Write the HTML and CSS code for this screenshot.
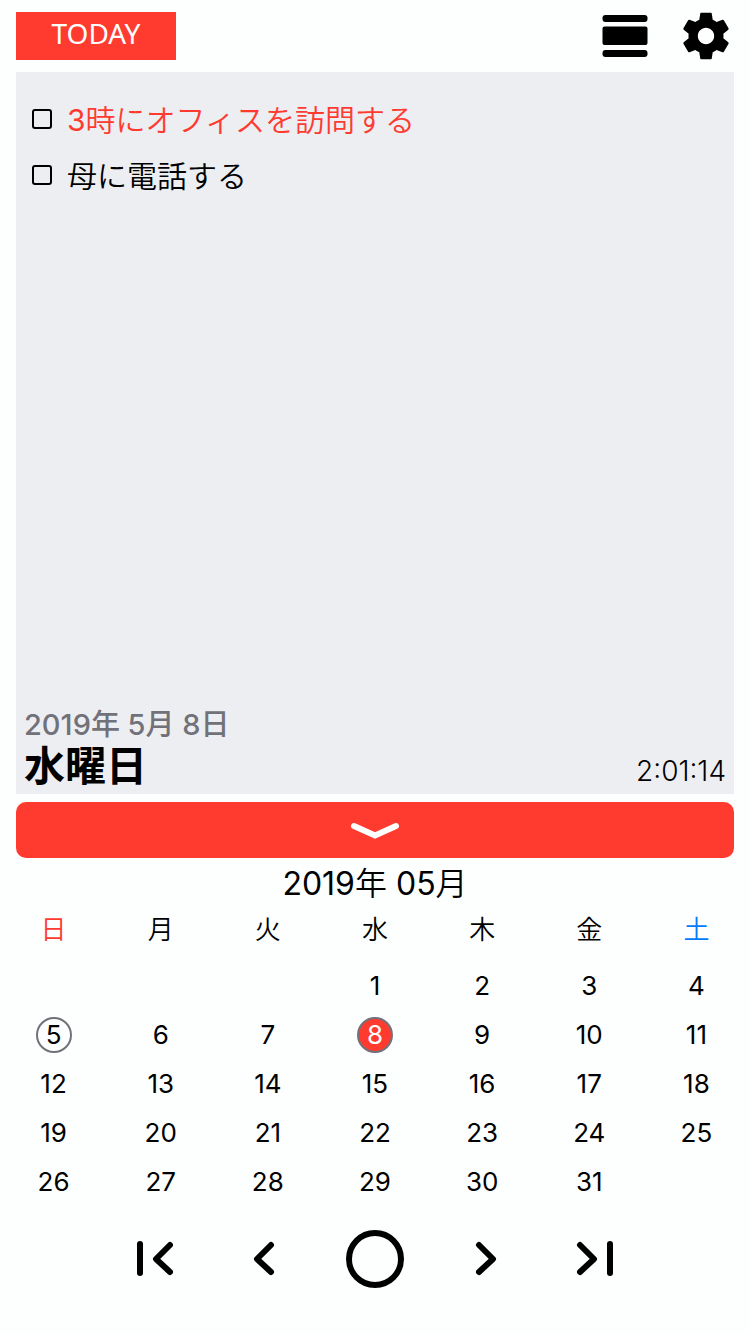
FILE: index.html
```html
<!DOCTYPE html>
<html lang="ja">
<head>
<meta charset="utf-8">
<meta name="viewport" content="width=device-width">
<title>カレンダー</title>
<link rel="stylesheet" href="styles.css">
</head>
<body>
<header class="toolbar">
  <button class="today" type="button">TODAY</button>
  <div class="tools">
    <button class="icon-button" type="button" aria-label="表示">
      <svg width="56" height="56" viewBox="0 0 56 56"><rect x="4.5" y="7" width="45" height="7" rx="3"/><rect x="4.5" y="18.5" width="45" height="18.5" rx="2"/><rect x="4.5" y="42" width="45" height="7" rx="3"/></svg>
    </button>
    <button class="icon-button" type="button" aria-label="設定">
      <svg width="56" height="56" viewBox="0 0 24 24"><path d="M19.43 12.98c.04-.32.07-.64.07-.98s-.03-.66-.07-.98l2.11-1.65c.19-.15.24-.42.12-.64l-2-3.46c-.12-.22-.39-.3-.61-.22l-2.49 1c-.52-.4-1.08-.73-1.69-.98l-.38-2.65C14.46 2.18 14.25 2 14 2h-4c-.25 0-.46.18-.49.42l-.38 2.65c-.61.25-1.17.59-1.69.98l-2.49-1c-.23-.09-.49 0-.61.22l-2 3.46c-.13.22-.07.49.12.64l2.11 1.65c-.04.32-.07.65-.07.98s.03.66.07.98l-2.11 1.65c-.19.15-.24.42-.12.64l2 3.46c.12.22.39.3.61.22l2.49-1c.52.4 1.08.73 1.69.98l.38 2.65c.03.24.24.42.49.42h4c.25 0 .46-.18.49-.42l.38-2.65c.61-.25 1.17-.59 1.69-.98l2.49 1c.23.09.49 0 .61-.22l2-3.46c.12-.22.07-.49-.12-.64l-2.11-1.65zM12 15.5c-1.93 0-3.5-1.57-3.5-3.5s1.57-3.5 3.5-3.5 3.5 1.57 3.5 3.5-1.57 3.5-3.5 3.5z"/></svg>
    </button>
  </div>
</header>

<main class="day-panel">
  <ul class="tasks">
    <li><label class="task urgent"><input type="checkbox"><span><b class="num">3</b>時にオフィスを訪問する</span></label></li>
    <li><label class="task"><input type="checkbox"><span>母に電話する</span></label></li>
  </ul>
  <div class="day-footer">
    <div>
      <div class="date">2019年 5月 8日</div>
      <h1 class="weekday">水曜日</h1>
    </div>
    <time class="clock">2:01:14</time>
  </div>
</main>

<button class="collapse" type="button" aria-label="カレンダーを閉じる">
  <svg width="56" height="24" viewBox="0 0 56 24"><path d="M7 8L28 17.500L49 8"/></svg>
</button>

<section class="calendar">
  <h2 class="month"><b class="num">2019</b>年 <b class="num">05</b>月</h2>
  <table class="days">
    <thead>
      <tr><th class="sun">日</th><th>月</th><th>火</th><th>水</th><th>木</th><th>金</th><th class="sat">土</th></tr>
    </thead>
    <tbody>
      <tr><td></td><td></td><td></td><td><button type="button">1</button></td><td><button type="button">2</button></td><td><button type="button">3</button></td><td><button type="button">4</button></td></tr>
      <tr><td><button class="ringed" type="button">5</button></td><td><button type="button">6</button></td><td><button type="button">7</button></td><td><button class="ringed selected" type="button">8</button></td><td><button type="button">9</button></td><td><button type="button">10</button></td><td><button type="button">11</button></td></tr>
      <tr><td><button type="button">12</button></td><td><button type="button">13</button></td><td><button type="button">14</button></td><td><button type="button">15</button></td><td><button type="button">16</button></td><td><button type="button">17</button></td><td><button type="button">18</button></td></tr>
      <tr><td><button type="button">19</button></td><td><button type="button">20</button></td><td><button type="button">21</button></td><td><button type="button">22</button></td><td><button type="button">23</button></td><td><button type="button">24</button></td><td><button type="button">25</button></td></tr>
      <tr><td><button type="button">26</button></td><td><button type="button">27</button></td><td><button type="button">28</button></td><td><button type="button">29</button></td><td><button type="button">30</button></td><td><button type="button">31</button></td><td></td></tr>
    </tbody>
  </table>
</section>

<nav class="pager">
  <button type="button" aria-label="前年"><svg width="64" height="64" viewBox="0 0 64 64"><path d="M17 18V47M47 19L33 33L47 46"/></svg></button>
  <button type="button" aria-label="前月"><svg width="64" height="64" viewBox="0 0 64 64"><path d="M38 19L24 33L38 46"/></svg></button>
  <button type="button" aria-label="今月"><svg width="64" height="64" viewBox="0 0 64 64"><circle cx="32" cy="33" r="26"/></svg></button>
  <button type="button" aria-label="翌月"><svg width="64" height="64" viewBox="0 0 64 64"><path d="M26 19L40 33L26 46"/></svg></button>
  <button type="button" aria-label="翌年"><svg width="64" height="64" viewBox="0 0 64 64"><path d="M17 19L31 33L17 46M47 18V47"/></svg></button>
</nav>
</body>
</html>
```
FILE: styles.css
```css
:root {
  --red: #ff3b30;
  --gray: #717179;
  --panel: #edeef2;
}

* {
  box-sizing: border-box;
}

body {
  display: flex;
  flex-direction: column;
  min-height: 100vh;
  margin: 0;
  background: #fdfefe;
  color: #000;
  font-family: Inter, "Noto Sans CJK JP", sans-serif;
}

button {
  padding: 0;
  border: 0;
  background: none;
  color: inherit;
  font: inherit;
  cursor: pointer;
}

svg {
  display: block;
}

.num {
  font-weight: 400;
}

.toolbar {
  display: flex;
  justify-content: space-between;
  align-items: center;
  height: 72px;
  padding: 0 16px;
}

.today {
  width: 160px;
  height: 48px;
  padding-bottom: 6px;
  background: var(--red);
  color: #fff;
  font-family: "Noto Sans", sans-serif;
  font-size: 28px;
  line-height: 42px;
}

.tools {
  display: flex;
  gap: 24px;
}

.day-panel {
  display: flex;
  flex: 1;
  flex-direction: column;
  justify-content: space-between;
  margin: 0 16px;
  background: var(--panel);
}

.tasks {
  margin: 0;
  padding: 19px 16px;
  list-style: none;
  font-size: 30px;
  font-weight: 350;
}

.task {
  display: flex;
  align-items: center;
  gap: 15px;
  height: 56px;
}

.task span {
  padding-bottom: 3px;
}

.task input {
  width: 20px;
  height: 20px;
  margin: 0;
  border: 2px solid #000;
  border-radius: 3px;
  appearance: none;
}

.task input:checked {
  background: #000;
}

.urgent {
  color: var(--red);
}

.day-footer {
  display: flex;
  justify-content: space-between;
  align-items: flex-end;
  padding: 0 8px;
}

.date {
  color: var(--gray);
  font-size: 29px;
  font-weight: 500;
  line-height: 36px;
}

.weekday {
  margin: 0;
  padding-bottom: 5px;
  font-size: 41px;
  font-weight: 700;
  line-height: 46px;
}

.clock {
  padding-bottom: 8px;
  font-size: 28px;
  font-weight: 300;
  line-height: 30px;
}

.collapse {
  display: flex;
  justify-content: center;
  align-items: center;
  height: 56px;
  margin: 8px 16px 0;
  border-radius: 10px;
  background: var(--red);
}

.collapse path {
  fill: none;
  stroke: #fff;
  stroke-width: 6;
  stroke-linecap: round;
}

.month {
  margin: 0;
  padding-top: 2px;
  font-size: 32px;
  font-weight: 350;
  line-height: 48px;
  text-align: center;
}

.days {
  width: 100%;
  border-collapse: collapse;
  table-layout: fixed;
  font-size: 26px;
  text-align: center;
}

.days th {
  height: 53px;
  padding: 0 0 10px;
  font-weight: 350;
  line-height: 43px;
}

.sun {
  color: var(--red);
}

.sat {
  color: #007aff;
}

.days td {
  height: 49px;
  padding: 0;
}

.days button {
  width: 36px;
  height: 36px;
  line-height: 32px;
}

.days .ringed {
  border: 2px solid var(--gray);
  border-radius: 50%;
}

.days .selected {
  background: var(--red);
  color: #fff;
}

.pager {
  display: flex;
  justify-content: center;
  padding: 20px 16px 44px;
}

.pager button {
  display: flex;
  flex: 0 1 110px;
  justify-content: center;
}

.pager svg {
  fill: none;
  stroke: #000;
  stroke-width: 6;
  stroke-linecap: round;
  stroke-linejoin: round;
}
```
